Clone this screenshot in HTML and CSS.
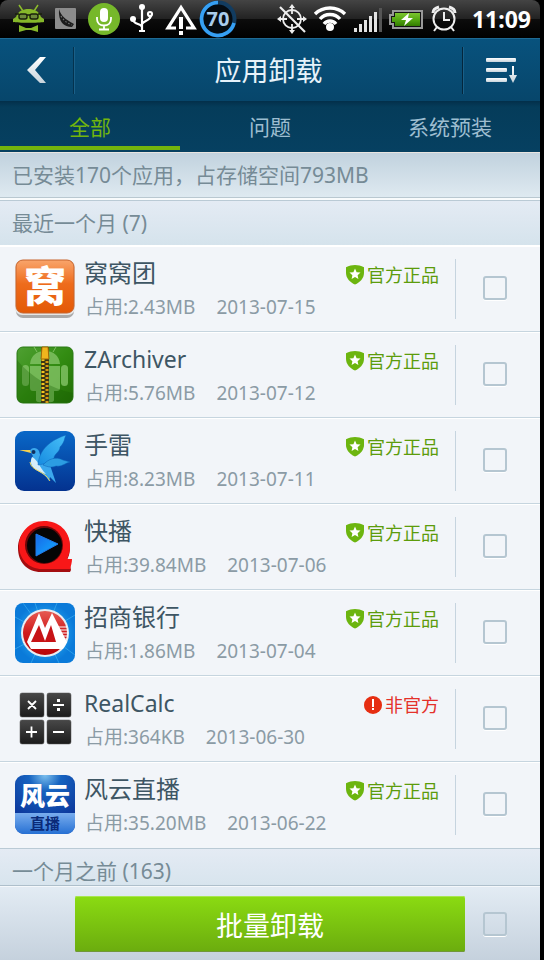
FILE: index.html
```html
<!DOCTYPE html>
<html lang="zh-CN">
<head>
    <meta charset="UTF-8">
    <meta name="viewport" content="width=device-width, initial-scale=1.0">
    <title>应用卸载</title>
    <link rel="stylesheet" href="styles.css">
</head>
<body>
    <!-- Shared gradients and badge symbols -->
    <svg class="defs" width="0" height="0" aria-hidden="true">
        <defs>
            <linearGradient id="orange" x1="0" y1="0" x2="0" y2="1"><stop offset="0" stop-color="#f9a56c"/><stop offset=".45" stop-color="#ee6c1c"/><stop offset="1" stop-color="#e35906"/></linearGradient>
            <linearGradient id="green" x1="0" y1="0" x2="1" y2="1"><stop offset="0" stop-color="#4fa032"/><stop offset=".5" stop-color="#338c12"/><stop offset="1" stop-color="#216d04"/></linearGradient>
            <linearGradient id="navy" x1="0" y1="0" x2="0" y2="1"><stop offset="0" stop-color="#0968c8"/><stop offset="1" stop-color="#04328f"/></linearGradient>
            <linearGradient id="wing" x1="0" y1="1" x2="1" y2="0"><stop offset="0" stop-color="#168be0"/><stop offset="1" stop-color="#48c0f8"/></linearGradient>
            <linearGradient id="play" x1="0" y1="0" x2="1" y2="1"><stop offset="0" stop-color="#1767e8"/><stop offset="1" stop-color="#12b0ff"/></linearGradient>
            <radialGradient id="sky"><stop offset="0" stop-color="#39c6ff"/><stop offset="1" stop-color="#0a7ad9"/></radialGradient>
            <linearGradient id="red" x1="0" y1="0" x2="0" y2="1"><stop offset="0" stop-color="#e65a52"/><stop offset=".5" stop-color="#cf1a1c"/><stop offset="1" stop-color="#b80508"/></linearGradient>
            <linearGradient id="key" x1="0" y1="0" x2="0" y2="1"><stop offset="0" stop-color="#484848"/><stop offset="1" stop-color="#1b1b1b"/></linearGradient>
            <radialGradient id="cloud" cx=".5" cy="0" r=".9"><stop offset="0" stop-color="#7cc0ee"/><stop offset=".3" stop-color="#1663c0"/><stop offset="1" stop-color="#0b2f94"/></radialGradient>
            <linearGradient id="cloudBase" x1="0" y1="0" x2="0" y2="1"><stop offset="0" stop-color="#79adee"/><stop offset="1" stop-color="#2670d3"/></linearGradient>
            <linearGradient id="silver" x1="0" y1="0" x2="0" y2="1"><stop offset="0" stop-color="#fff"/><stop offset="1" stop-color="#c8d4dc"/></linearGradient>
            <linearGradient id="battery" x1="0" y1="0" x2="0" y2="1"><stop offset="0" stop-color="#7cc52f"/><stop offset=".5" stop-color="#55a812"/><stop offset="1" stop-color="#327c00"/></linearGradient>
        </defs>
        <symbol id="shield" viewBox="0 0 18 20">
            <path fill="#6cb50f" d="M9 0C6 0 3 .7 0 2.2V8c0 5 4 9.500 9 11.500C14 17.500 18 13 18 8V2.200C15 .7 12 0 9 0z"/>
            <path fill="#fff" d="M9 3.600l1.600 3.600 3.900.4-2.900 2.600.8 3.900L9 12.100l-3.400 2 .8-3.900-2.900-2.600 3.900-.4z"/>
        </symbol>
        <symbol id="warning" viewBox="0 0 18 20">
            <circle cx="9" cy="10" r="9" fill="#e62e12"/>
            <path fill="#fff" d="M8 4h2v8H8zM8 13h2v2H8z"/>
        </symbol>
    </svg>

    <div class="app">
        <div class="status-bar">
            <div class="status-icons">
                <svg viewBox="0 0 38 38"><path d="M10 5l4 6M29 5l-4 6" stroke="#8dbd2c" stroke-width="1.500"/><path fill="#86b82a" d="M7 17C9 11 14 9 19.500 9S30 11 32 17l3 2v3c-5 1-26 1-31 0v-3z"/><path fill="#86b82a" d="M10 25l7 3h5l7-3v7l-7-2h-5l-7 2z"/><g fill="#6c8a3c" stroke="#1a210c" stroke-width="1.400"><rect x="10" y="14" width="8" height="5" rx="2"/><rect x="21" y="14" width="8" height="5" rx="2"/><path d="M18 15h3M6 14h4M29 14h4"/></g></svg>
                <svg viewBox="0 0 38 38"><rect x="8" y="8" width="21" height="21" rx="1" fill="#8c8c8c"/><path fill="#1c1c1c" d="M12 9c2 7 6 10 15 15l-2 3c-8 0-14-5-13-18z"/><path d="M14 16c3 5 6 7 11 9" fill="none" stroke="#777" stroke-width="1.200" stroke-dasharray="1.500 2"/></svg>
                <svg viewBox="0 0 38 38"><circle cx="19" cy="19" r="16" fill="#76b82a"/><rect x="15" y="8" width="8" height="14" rx="4" fill="#fff"/><path d="M12 17v2c0 4 3 6.500 7 6.500s7-2.500 7-6.500v-2M19 25v4M14 29.500h10" fill="none" stroke="#fff" stroke-width="1.800"/></svg>
                <svg viewBox="0 0 38 38"><g fill="none" stroke="#fff" stroke-width="2.200"><path d="M19 8v22M16 31h6M10 19c0 6 8 4 9 8M28 15c0 6-7 5-9 9"/><circle cx="27" cy="14" r="2"/></g><circle cx="19" cy="7" r="3" fill="#fff"/><circle cx="10" cy="19" r="3" fill="#fff"/></svg>
                <svg viewBox="0 0 38 38"><path d="M15 28H7L20 7.500 33 28h-8" fill="none" stroke="#fff" stroke-width="3.200"/><path fill="#fff" d="M18 17h4v12h-4zM18 31h4v4h-4z"/></svg>
                <svg viewBox="0 0 38 38"><circle cx="19" cy="19" r="16.500" fill="#050c12" stroke="#123c60" stroke-width="4"/><path d="M35 23A16.500 16.500 0 1 1 19 2.500" fill="none" stroke="#36a0f4" stroke-width="3.500"/><text x="19" y="26" text-anchor="middle" class="dial">70</text></svg>
            </div>
            <div class="status-icons">
                <svg viewBox="0 0 38 38"><g fill="none" stroke="#eee" stroke-width="1.800"><circle cx="19" cy="19" r="9"/><path d="M19 8v6M19 24v6M8 19h6M24 19h6"/><path stroke-width="2.200" d="M7 7l25 25"/></g><path fill="#eee" d="M16 8l3-4 3 4zM16 30l3 4 3-4zM8 16l-4 3 4 3zM30 16l4 3-4 3z"/></svg>
                <svg viewBox="0 0 38 38"><g fill="none" stroke="#fff" stroke-width="3.400"><path d="M4 14c8-8 22-8 30 0M9 19c5-6 15-6 20 0M13 24c3-4 9-4 12 0"/></g><circle cx="19" cy="27" r="4" fill="#fff"/></svg>
                <svg viewBox="0 0 38 38"><path fill="#e2e2e2" d="M5 28h3v4H5zM10 24h3v8h-3zM15 20h3v12h-3zM20 16h3v16h-3zM25 12h3v20h-3z"/><path fill="#555" d="M30 8h3v24h-3z"/></svg>
                <svg viewBox="0 0 38 38"><path fill="#141414" stroke="#999" stroke-width="2" d="M6 11h29v17H6v-4H3v-9h3z"/><path fill="url(#battery)" d="M8 13h25v13H8v-4H5v-5h3z"/><path fill="#fff" d="M22 13l-8 7h5l-2 6 9-8h-5z"/></svg>
                <svg viewBox="0 0 38 38"><g fill="none" stroke="#eee" stroke-width="2"><circle cx="19" cy="19" r="10.500"/><path d="M19 12v8h6M12 27l-3 4M26 27l3 4" /><path stroke-width="3" d="M8 13c0-3 2-5 6-6M30 13c0-3-2-5-6-6"/></g></svg>
            </div>
            <span class="clock">11:09</span>
        </div>

        <header class="title-bar">
            <button class="back" aria-label="返回">
                <svg width="20" height="28" viewBox="0 0 20 28"><path fill="url(#silver)" d="M13 1h6L8 14l11 13h-6L0 14z"/></svg>
            </button>
            <h1>应用卸载</h1>
            <button class="sort" aria-label="排序">
                <svg width="32" height="26" viewBox="0 0 32 26"><g fill="url(#silver)"><rect width="30" height="4" rx="1" y="1"/><rect width="21" height="4" rx="1" y="11"/><rect width="21" height="4" rx="1" y="21"/><path d="M26 9h2v9h3l-4 8-4-8h3z"/></g></svg>
            </button>
        </header>

        <nav class="tabs">
            <button class="tab active">全部</button>
            <button class="tab">问题</button>
            <button class="tab">系统预装</button>
        </nav>

        <p class="summary">已安装170个应用，占存储空间793MB</p>

        <main class="list">
            <h2 class="section-title">最近一个月 (7)</h2>
            <ul class="apps">
                <li class="app-row">
                    <svg class="app-icon" viewBox="0 0 60 60"><rect x="1" y="5" width="58" height="54" rx="7" fill="#aaa"/><rect y="1" width="60" height="55" rx="7" fill="#e5e5e5"/><rect x="1" y="1" width="58" height="53" rx="7" fill="url(#orange)" stroke="#c8642c"/><text x="30" y="43" text-anchor="middle" class="wo">窝</text></svg>
                    <div class="info">
                        <label class="name" for="app1">窝窝团</label>
                        <p class="meta"><span>占用:2.43MB</span><span>2013-07-15</span></p>
                    </div>
                    <span class="badge"><svg><use href="#shield"/></svg>官方正品</span>
                    <div class="pick"><input type="checkbox" id="app1"></div>
                </li>
                <li class="app-row">
                    <svg class="app-icon" viewBox="0 0 60 60"><rect x="2" y="2" width="56" height="56" rx="6" fill="url(#green)" stroke="#2a7a14"/><g fill="#7fbf62" fill-opacity=".85"><path d="M15 19c1-9 7-13 15-13s14 4 15 13z"/><path d="M15 21h30v22c0 2-1 3-3 3h-3v9c0 3-7 3-7 0v-9h-4v9c0 3-7 3-7 0v-9h-3c-2 0-3-1-3-3z"/><rect x="7" y="20" width="7" height="21" rx="3.500"/><rect x="46" y="20" width="7" height="21" rx="3.500"/></g><path d="M22 7l-3-5M38 7l3-5" stroke="#7fbf62"/><path fill="#175c04" fill-opacity=".3" d="M2 15c15 18 33 28 56 33v5c0 3-2 5-5 5H7c-3 0-5-2-5-5z"/><path fill="#3b3516" d="M26 2h8v56h-8z"/><path d="M28 14v44" stroke="#f3c51c" stroke-width="3" stroke-dasharray="2 2"/><path d="M32 16v42" stroke="#d69a10" stroke-width="3" stroke-dasharray="2 2"/><path fill="#f0b51d" stroke="#9e6b09" d="M27 2h6l1 12h-8z"/></svg>
                    <div class="info">
                        <label class="name latin" for="app2">ZArchiver</label>
                        <p class="meta"><span>占用:5.76MB</span><span>2013-07-12</span></p>
                    </div>
                    <span class="badge"><svg><use href="#shield"/></svg>官方正品</span>
                    <div class="pick"><input type="checkbox" id="app2"></div>
                </li>
                <li class="app-row">
                    <svg class="app-icon" viewBox="0 0 60 60"><rect width="60" height="60" rx="9" fill="url(#navy)"/><path fill="#f5d04f" d="M4 19l12 0v3z"/><path fill="#3ba8ed" d="M15 20c1-4 7-4 9 0l2 7c5 1 9 5 10 10l5 15-6-6-1 4c-3-6-8-8-13-11-6-4-7-8-3-14z"/><path fill="#d5edfa" d="M17 26c6 3 7 10 14 17-10-3-18-8-14-17z"/><path fill="none" stroke="#f0d45c" d="M15 31c1 9 14 8 20 19"/><path fill="url(#wing)" stroke="#0a60b8" stroke-width=".5" d="M23 34C24 18 36 9 51 4c-2 4-1 7-6 12 0 5-6 7-6 11-3 4-9 6-16 7z"/><path fill="#2c9de2" stroke="#0a60b8" stroke-width=".5" d="M28 34c5-6 13-9 20-5l7 2c-5 1-8 5-14 4-4 2-8 1-13-1z"/><circle cx="18.500" cy="21" r="2" fill="#102f60"/></svg>
                    <div class="info">
                        <label class="name" for="app3">手雷</label>
                        <p class="meta"><span>占用:8.23MB</span><span>2013-07-11</span></p>
                    </div>
                    <span class="badge"><svg><use href="#shield"/></svg>官方正品</span>
                    <div class="pick"><input type="checkbox" id="app3"></div>
                </li>
                <li class="app-row">
                    <svg class="app-icon" viewBox="0 0 60 60"><path fill="#a30d10" d="M29 6C14 6 3 17 3 31s9 24 23 24h29l1-2-2-9-2-1c1-2 3-6 3-13C55 15 44 6 29 6z"/><path fill="#f81718" d="M29 4C14 4 4 16 4 29s10 23 23 23h28c1-3 2-7 2-10h-5c1-2 3-7 3-13C55 14 44 4 29 4z"/><circle cx="29" cy="28" r="19" fill="#6d0708"/><circle cx="29.500" cy="28.500" r="17.500" fill="#050505"/><path fill="url(#play)" stroke="#2378e8" stroke-linejoin="round" d="M21 17l22 10-22 12z"/></svg>
                    <div class="info">
                        <label class="name" for="app4">快播</label>
                        <p class="meta"><span>占用:39.84MB</span><span>2013-07-06</span></p>
                    </div>
                    <span class="badge"><svg><use href="#shield"/></svg>官方正品</span>
                    <div class="pick"><input type="checkbox" id="app4"></div>
                </li>
                <li class="app-row">
                    <svg class="app-icon" viewBox="0 0 60 60"><rect width="60" height="60" rx="8" fill="url(#sky)"/><path stroke="#5bd3ff" stroke-opacity=".4" d="M30 30L8 0M30 30L0 14M30 30L20 0M30 30L42 0M30 30L60 12M30 30L0 46M30 30l30 22M30 30L16 60M30 30l14 30"/><circle cx="30" cy="30" r="24" fill="#e8eef3"/><circle cx="30" cy="30" r="22" fill="url(#red)"/><path stroke="#fff" stroke-width="1.200" d="M42 24h10M43 27h10M44 30h9M45 33h8M46 36h6"/><path fill="#fff" d="M24 10l6 15 7-15 15 29-4 7H16l-4-7z"/><path fill="#c71316" d="M24 22l-8 17h25l-5-17-6 16z"/></svg>
                    <div class="info">
                        <label class="name" for="app5">招商银行</label>
                        <p class="meta"><span>占用:1.86MB</span><span>2013-07-04</span></p>
                    </div>
                    <span class="badge"><svg><use href="#shield"/></svg>官方正品</span>
                    <div class="pick"><input type="checkbox" id="app5"></div>
                </li>
                <li class="app-row">
                    <svg class="app-icon" viewBox="0 0 60 60"><g fill="url(#key)" stroke="#555" stroke-width=".5"><rect x="5" y="4" width="24" height="24" rx="2"/><rect x="32" y="4" width="24" height="24" rx="2"/><rect x="5" y="31" width="24" height="24" rx="2"/><rect x="32" y="31" width="24" height="24" rx="2"/></g><path fill="none" stroke="#fff" stroke-width="1.800" d="M13 12l8 8M21 12l-8 8M38 16h11M11 43h11M16.500 37.500v11M38 43h11"/><path fill="#fff" d="M42 10h3v3h-3zM42 19h3v3h-3z"/></svg>
                    <div class="info">
                        <label class="name latin" for="app6">RealCalc</label>
                        <p class="meta"><span>占用:364KB</span><span>2013-06-30</span></p>
                    </div>
                    <span class="badge unofficial"><svg><use href="#warning"/></svg>非官方</span>
                    <div class="pick"><input type="checkbox" id="app6"></div>
                </li>
                <li class="app-row">
                    <svg class="app-icon" viewBox="0 0 60 60"><rect width="60" height="59" rx="9" fill="url(#cloud)"/><path fill="url(#cloudBase)" d="M0 38h60v12c0 5-4 9-9 9H9c-5 0-9-4-9-9z"/><text x="30" y="30" text-anchor="middle" class="fengyun">风云</text><text x="30" y="54" text-anchor="middle" class="zhibo">直播</text></svg>
                    <div class="info">
                        <label class="name" for="app7">风云直播</label>
                        <p class="meta"><span>占用:35.20MB</span><span>2013-06-22</span></p>
                    </div>
                    <span class="badge"><svg><use href="#shield"/></svg>官方正品</span>
                    <div class="pick"><input type="checkbox" id="app7"></div>
                </li>
            </ul>
            <h2 class="section-title">一个月之前 (163)</h2>
        </main>

        <footer class="actions">
            <button class="uninstall">批量卸载</button>
            <input type="checkbox" aria-label="全选">
        </footer>
    </div>
</body>
</html>
```
FILE: styles.css
```css
* {
    box-sizing: border-box;
}
body {
    margin: 0;
    padding-right: 4px;
    background: #000;
    font-family: "Noto Sans", "Noto Sans CJK SC", sans-serif;
    color: #768b96;
}
h1, h2, p, ul {
    margin: 0;
    padding: 0;
    font-weight: normal;
}
button {
    border: none;
    padding: 0;
    background: none;
    font-family: inherit;
    cursor: pointer;
}
svg {
    display: block;
    flex: none;
}
.defs {
    position: absolute;
}
.app {
    display: flex;
    flex-direction: column;
    height: 100vh;
}

/* Phone status bar */
.status-bar {
    display: flex;
    flex: none;
    justify-content: space-between;
    align-items: center;
    height: 38px;
    padding: 0 9px;
    background: linear-gradient(#444, #222 50%, #0c0c0c 51%, #000);
    border-radius: 8px 8px 0 0;
}
.status-icons {
    display: flex;
}
.status-icons:first-child {
    margin-right: auto;
}
.status-icons svg {
    width: 38px;
    height: 38px;
}
.dial {
    font-size: 20px;
    font-weight: bold;
    fill: #a9cdec;
}
.clock {
    margin-left: 9px;
    color: #fff;
    font-size: 23px;
    font-weight: bold;
}

/* Title bar */
.title-bar {
    display: flex;
    flex: none;
    align-items: center;
    height: 63px;
    background: linear-gradient(#08527d, #07466b);
    border-top: 1px solid #1e6a94;
}
.title-bar h1 {
    flex: 1;
    padding-top: 2px;
    color: #e6f2fa;
    font-size: 27px;
    line-height: 40px;
    text-align: center;
}
.back, .sort {
    display: flex;
    align-items: center;
    justify-content: center;
    height: 47px;
}
.back {
    width: 75px;
    border-right: 1px solid #1a6088;
    box-shadow: inset -1px 0 #04324e;
}
.sort {
    width: 78px;
    border-left: 1px solid #04263c;
    box-shadow: inset 1px 0 #1a6088;
}

/* Tabs */
.tabs {
    display: grid;
    flex: none;
    grid-template-columns: repeat(3, 1fr);
    height: 51px;
    padding-bottom: 2px;
    background: linear-gradient(#032f4a, #053c5a 6px, #064061);
}
.tab {
    border-top: 4px solid transparent;
    border-bottom: 4px solid transparent;
    color: #9dbdd0;
    font-size: 21px;
}
.tab.active {
    color: #73b50d;
    border-bottom-color: #73b50d;
}

.summary {
    flex: none;
    padding: 0 12px;
    background: linear-gradient(#c1d2de, #dfeaf1);
    border-top: 1px solid #e8e4e0;
    border-bottom: 2px solid #f8fbfc;
    box-shadow: inset 0 -1px #b9c8d0;
    font-size: 21px;
    line-height: 45px;
}

/* App list */
.list {
    flex: 1;
    min-height: 0;
    overflow-y: auto;
    scrollbar-width: none;
    background: #f2f5f9;
}
.section-title {
    padding: 0 12px;
    background: linear-gradient(#e4ebf4, #d5e3ec);
    border-top: 1px solid #bacad5;
    border-bottom: 1px solid #fff;
    font-size: 21px;
    line-height: 44px;
}
.apps {
    list-style: none;
}
.app-row {
    display: flex;
    align-items: center;
    height: 86px;
    padding-left: 15px;
    border-bottom: 1px solid #c6d5df;
    box-shadow: inset 0 1px #fff;
}
.app-row:last-child {
    border-bottom: none;
}
.app-icon {
    width: 60px;
    height: 60px;
}
.wo {
    font-size: 42px;
    font-weight: 900;
    fill: #fff;
}
.fengyun {
    font-size: 25px;
    font-weight: 900;
    fill: #fff;
}
.zhibo {
    font-size: 15px;
    font-weight: bold;
    fill: #0a2a78;
}
.info {
    flex: 1;
    padding: 2px 0 0 9px;
    white-space: nowrap;
}
.name {
    display: block;
    color: #3e5664;
    font-size: 24px;
    line-height: 34px;
}
.name.latin {
    font-size: 23px;
}
.meta {
    display: flex;
    gap: 21px;
    padding-left: 1px;
    color: #8b9ba5;
    font-size: 19px;
    line-height: 34px;
}
.badge {
    display: flex;
    align-self: flex-start;
    align-items: center;
    gap: 3px;
    padding: 16px 16px 0 0;
    color: #5c9c0b;
    font-size: 18px;
    line-height: 26px;
}
.badge svg {
    width: 18px;
    height: 20px;
}
.badge.unofficial {
    color: #e4312a;
}
.pick {
    display: flex;
    align-items: center;
    height: 60px;
    padding: 0 33px 2px 27px;
    border-left: 1px solid #c6d4df;
}
input[type="checkbox"] {
    appearance: none;
    flex: none;
    width: 24px;
    height: 24px;
    margin: 0;
    border: 2px solid #b5c6d1;
    border-radius: 3px;
    box-shadow: 0 1px #fff;
    cursor: pointer;
}
input[type="checkbox"]:checked {
    background: #73b50d;
}

/* Bottom bar */
.actions {
    display: flex;
    flex: none;
    align-items: center;
    gap: 18px;
    height: 75px;
    padding: 2px 33px 0 75px;
    background: linear-gradient(#e3ecf4, #c5d1dd);
    border-top: 1px solid #aebfcb;
    box-shadow: inset 0 1px #f4f8fb;
}
.uninstall {
    flex: 1;
    height: 56px;
    background: linear-gradient(#8bdb12, #6bac0e);
    border-radius: 2px;
    box-shadow: inset 0 1px #a9e650, inset 0 -1px #719839;
    color: #fff;
    font-size: 27px;
}
```
